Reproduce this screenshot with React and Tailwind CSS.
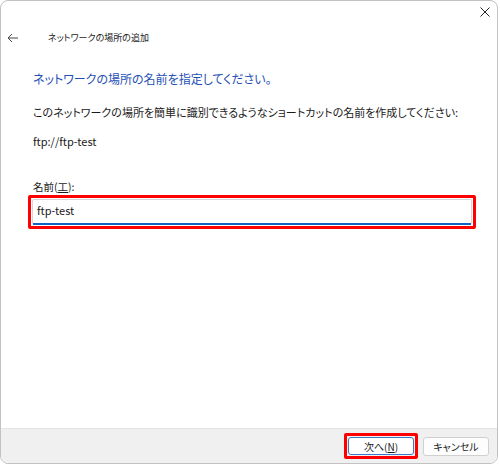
export default function App() {
  const font = { fontFamily: '"Noto Sans CJK JP", "Noto Sans", sans-serif', fontFeatureSettings: '"palt"' };
  return (
    <div className="w-[500px] h-[465px] bg-white" style={font}>
      <div className="w-[498px] h-[464px] border border-[#c2c2c2] rounded-[8px] overflow-hidden flex flex-col bg-white">
        <div className="h-[22px] flex justify-end items-center pr-[7px]">
          <svg width="10" height="10" viewBox="0 0 10 10">
            <path d="M0.5 0.5 L9.5 9.5 M9.5 0.5 L0.5 9.5" stroke="#222" strokeWidth="1" fill="none" />
          </svg>
        </div>
        <div className="h-[30px] flex items-center">
          <div className="w-[47px] pl-[6px] flex items-center">
            <svg width="12" height="10" viewBox="0 0 12 10">
              <path d="M11 5 H1.2 M5 1 L1 5 L5 9" stroke="#444" strokeWidth="1" fill="none" />
            </svg>
          </div>
          <span className="text-[9px] leading-[12px] text-[#222]">ネットワークの場所の追加</span>
        </div>
        <div className="pl-[32px] flex flex-col">
          <div className="mt-[18px] text-[12px] leading-[16px] text-[#1f4fb5]">ネットワークの場所の名前を指定してください。</div>
          <div className="mt-[18px] text-[11px] leading-[14px] text-[#1a1a1a]">このネットワークの場所を簡単に識別できるようなショートカットの名前を作成してください:</div>
          <div className="mt-[15px] text-[11px] leading-[14px] text-[#1a1a1a]">ftp://ftp-test</div>
          <div className="mt-[32px] text-[10.5px] leading-[14px] text-[#1a1a1a]">名前(<span className="underline">工</span>):</div>
        </div>
        <div className="mt-[1px] ml-[27px] w-[448px] h-[34px] border-[3px] border-[#ff0000] rounded-[2px] p-[1px] flex">
          <div className="flex-1 bg-white border border-[#d6d6d6] border-b-0 rounded-[2px] flex flex-col">
            <div className="flex-1 flex items-center pl-[4px] pb-[3px] text-[11px] text-[#1a1a1a]">ftp-test</div>
            <div className="h-[2px] bg-[#1062c2]"></div>
          </div>
        </div>
        <div className="flex-1"></div>
        <div className="h-[35px] border-t border-[#e3e3e3] bg-[#f0f0f0] flex items-center justify-end pr-[8px] gap-[5px]">
          <div className="w-[74px] h-[26px] border-[3px] border-[#ff0000] rounded-[2px] p-[1px] flex">
            <div className="flex-1 bg-white border border-[#3a78c8] rounded-[3px] flex items-center justify-center text-[10px] text-[#1a1a1a]">次へ(<span className="underline">N</span>)</div>
          </div>
          <div className="w-[66px] h-[19px] bg-[#fdfdfd] border border-[#d0d0d0] rounded-[3px] flex items-center justify-center text-[10px] text-[#1a1a1a]">キャンセル</div>
        </div>
      </div>
    </div>
  );
}
